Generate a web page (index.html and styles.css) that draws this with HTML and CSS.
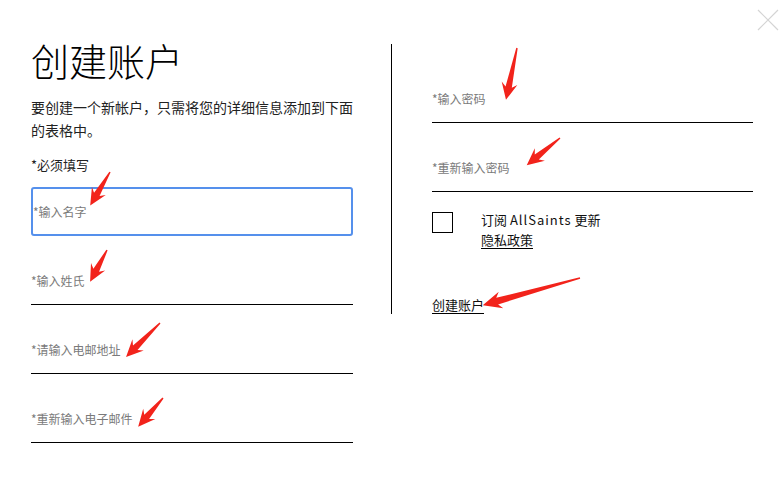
FILE: index.html
```html
<!DOCTYPE html>
<html lang="zh-CN">

<head>
    <meta charset="UTF-8">
    <meta name="viewport" content="width=device-width, initial-scale=1.0">
    <title>创建账户</title>

    <link rel="stylesheet" href="styles.css">
</head>

<body>

    <div id="register-page">

        <!-- Left column: name + email -->
        <div class="reg-col reg-left">
            <h1>创建账户</h1>
            <p class="reg-intro">要创建一个新帐户，只需将您的详细信息添加到下面的表格中。</p>
            <p class="reg-required">*必须填写</p>

            <input type="text" class="reg-field reg-field-focus" placeholder="*输入名字">
            <input type="text" class="reg-field" placeholder="*输入姓氏">
            <input type="email" class="reg-field" placeholder="*请输入电邮地址">
            <input type="email" class="reg-field" placeholder="*重新输入电子邮件">
        </div>

        <!-- Right column: password + options -->
        <div class="reg-col reg-right">
            <input type="password" class="reg-field" placeholder="*输入密码">
            <input type="password" class="reg-field" placeholder="*重新输入密码">

            <div class="reg-subscribe">
                <span class="reg-checkbox"></span>
                <div class="reg-subscribe-text">
                    <span>订阅 <span class="brand">AllSaints</span> 更新</span>
                    <a href="#" class="reg-link">隐私政策</a>
                </div>
            </div>

            <a href="#" class="reg-link reg-submit">创建账户</a>
        </div>
    </div>

    <button class="close-btn" aria-label="关闭">
        <svg width="22" height="22" viewBox="0 0 22 22">
            <path d="M1 1 L21 21 M21 1 L1 21" stroke="#d4d4d4" stroke-width="1.2" fill="none" />
        </svg>
    </button>

    <!-- red annotation arrows -->
    <svg class="notes" width="780" height="492" viewBox="0 0 780 492">
        <g fill="#f2231b">
            <polygon transform="translate(110,172) rotate(120.5)" points="0,-0.7 26,-3.2 22,-8 39,0 22,8 26,3.2 0,0.7" />
            <polygon transform="translate(107,250) rotate(118)" points="0,-0.7 23,-3.2 19,-8 36,0 19,8 23,3.2 0,0.7" />
            <polygon transform="translate(160,323) rotate(135)" points="0,-0.7 35,-3.2 31,-8 48,0 31,8 35,3.2 0,0.7" />
            <polygon transform="translate(163,398) rotate(130.8)" points="0,-0.7 25,-3.2 21,-8 38,0 21,8 25,3.2 0,0.7" />
            <polygon transform="translate(517,48) rotate(102)" points="0,-0.7 40,-3.2 36,-8 53,0 36,8 40,3.2 0,0.7" />
            <polygon transform="translate(560,138) rotate(140.7)" points="0,-0.7 30,-3.2 26,-8 43,0 26,8 30,3.2 0,0.7" />
            <polygon transform="translate(580,278) rotate(164.4)" points="0,-0.7 86,-3.4 82,-8.5 101,0 82,8.5 86,3.4 0,0.7" />
        </g>
    </svg>

</body>

</html>
```

FILE: styles.css
```css
body {
    margin: 0;
    font-family: "Noto Sans CJK SC", "Noto Sans", sans-serif;
    background-color: #fff;
    color: #111;
}

#register-page {
    display: flex;
    align-items: flex-start;
    padding: 38px 0 0 31px;
}

.reg-col {
    display: flex;
    flex-direction: column;
}

.reg-left {
    width: 322px;
}

.reg-right {
    width: 321px;
    margin-top: 6px;
    margin-left: 38px;
    padding: 30px 0 0 40px;
    border-left: 1px solid #000;
}

h1 {
    margin: 0;
    font-size: 38px;
    font-weight: 300;
    line-height: 44px;
    color: #000;
}

.reg-intro {
    margin: 14px 0 0;
    font-size: 14px;
    line-height: 23px;
    color: #222;
}

.reg-required {
    margin: 13px 0 0;
    font-size: 13px;
    line-height: 20px;
    color: #222;
}

.reg-field {
    box-sizing: border-box;
    width: 100%;
    height: 49px;
    margin: 20px 0 0;
    padding: 0;
    border: none;
    border-bottom: 1px solid #000;
    font-family: inherit;
    font-size: 12px;
    color: #111;
    background: transparent;
    outline: none;
}

.reg-right .reg-field:first-child {
    margin-top: 0;
}

.reg-field-focus {
    margin-top: 12px;
    border: 2px solid #5590ec;
    border-radius: 3px;
}

.reg-field::placeholder {
    color: #7a7a7a;
}

.reg-subscribe {
    display: flex;
    gap: 28px;
    margin-top: 20px;
}

.reg-checkbox {
    width: 19px;
    height: 19px;
    border: 1px solid #000;
}

.reg-subscribe-text {
    display: flex;
    flex-direction: column;
    align-items: flex-start;
    margin-top: -2px;
    font-size: 13px;
    line-height: 20px;
    color: #111;
}

.brand {
    letter-spacing: 1px;
}

.reg-link {
    display: inline-block;
    color: #111;
    font-size: 13px;
    line-height: 16px;
    text-decoration: none;
    border-bottom: 1px solid #000;
}

.reg-subscribe-text .reg-link {
    margin-top: 2px;
}

.reg-submit {
    align-self: flex-start;
    margin-top: 48px;
}

.close-btn {
    position: absolute;
    top: 9px;
    right: 1px;
    padding: 0;
    border: none;
    background: none;
}

.notes {
    position: absolute;
    top: 0;
    left: 0;
    pointer-events: none;
}
```
